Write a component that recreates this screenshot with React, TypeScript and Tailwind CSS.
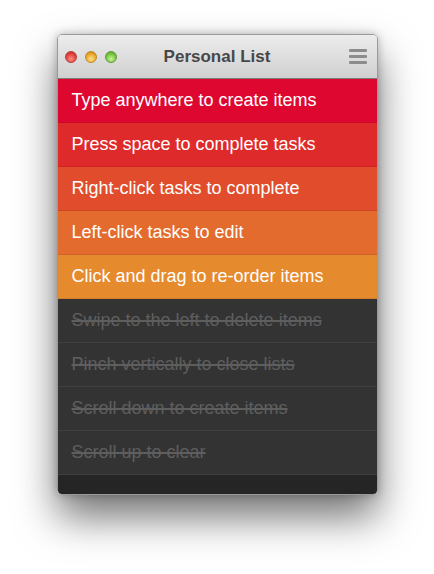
import React from "react";

const active = [
  { text: "Type anywhere to create items", bg: "bg-[#dd0730]", border: "border-[#c9062b]" },
  { text: "Press space to complete tasks", bg: "bg-[#df2a2b]", border: "border-[#cc2526]" },
  { text: "Right-click tasks to complete", bg: "bg-[#e14d2c]", border: "border-[#cd4527]" },
  { text: "Left-click tasks to edit", bg: "bg-[#e36b2e]", border: "border-[#cf6229]" },
  { text: "Click and drag to re-order items", bg: "bg-[#e68a2e]", border: "border-[#d27e2a]" },
];

const done = [
  "Swipe to the left to delete items",
  "Pinch vertically to close lists",
  "Scroll down to create items",
  "Scroll up to clear",
];

export default function App() {
  return (
    <div className="w-[434px] h-[574px] bg-white flex justify-center pt-[34px]" style={{ fontFamily: '"Liberation Sans", Arial, sans-serif' }}>
      <div className="w-[321px] h-[461px] flex flex-col rounded-[5px] overflow-hidden shadow-[0_22px_40px_rgba(0,0,0,0.55),0_0_8px_rgba(0,0,0,0.25)] border border-[#9a9a9a]">
        <div className="h-[44px] shrink-0 grid grid-cols-[1fr_auto_1fr] items-center px-[7px] bg-gradient-to-b from-[#ececec] to-[#d0d0d0] border-b border-[#7d7d7d]">
          <div className="flex gap-[8px] items-center">
            <span className="w-[12px] h-[12px] rounded-full bg-[radial-gradient(circle_at_50%_70%,#ff8a85,#e0403a_60%,#b3231e)] border border-[#b83a36]" />
            <span className="w-[12px] h-[12px] rounded-full bg-[radial-gradient(circle_at_50%_70%,#ffe08a,#e8a527_60%,#b97a12)] border border-[#c08a2a]" />
            <span className="w-[12px] h-[12px] rounded-full bg-[radial-gradient(circle_at_50%_70%,#c8f59a,#74c33b_60%,#4f9624)] border border-[#5f9a38]" />
          </div>
          <div className="text-center text-[17px] font-bold text-[#474747]">Personal List</div>
          <div className="flex flex-col gap-[3px] justify-self-end mr-[3px]">
            <span className="block w-[18px] h-[3px] bg-[#8c8c8c] rounded-[1px]" />
            <span className="block w-[18px] h-[3px] bg-[#8c8c8c] rounded-[1px]" />
            <span className="block w-[18px] h-[3px] bg-[#8c8c8c] rounded-[1px]" />
          </div>
        </div>
        {active.map((r) => (
          <div key={r.text} className={`h-[44px] shrink-0 flex items-center pl-[14px] text-white text-[18px] border-b ${r.bg} ${r.border}`}>
            {r.text}
          </div>
        ))}
        {done.map((t) => (
          <div key={t} className="h-[44px] shrink-0 flex items-center pl-[14px] text-[#5e5e5e] text-[18px] line-through decoration-2 bg-[#333333] border-b border-[#3f3f3f]">
            {t}
          </div>
        ))}
        <div className="flex-1 bg-[#252525]" />
      </div>
    </div>
  );
}
